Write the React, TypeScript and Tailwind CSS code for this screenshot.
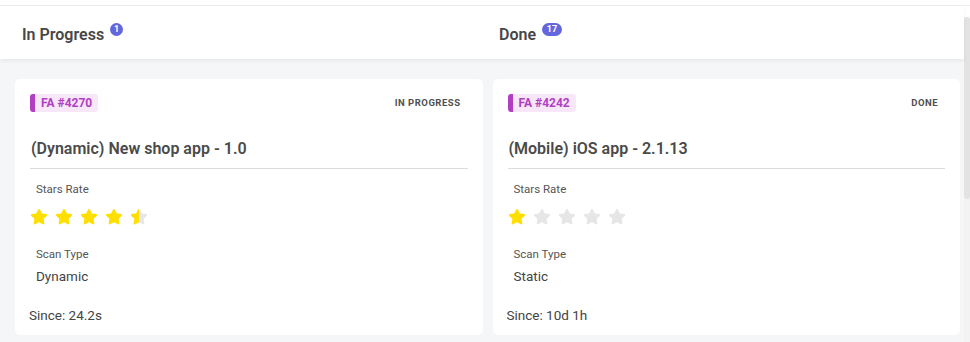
import { Star } from 'lucide-react';

type Card = {
  tag: string;
  status: string;
  title: string;
  rating: number;
  scanType: string;
  since: string;
};

const columns: { name: string; count: number; card: Card }[] = [
  {
    name: 'In Progress',
    count: 1,
    card: { tag: 'FA #4270', status: 'IN PROGRESS', title: '(Dynamic) New shop app - 1.0', rating: 4.5, scanType: 'Dynamic', since: '24.2s' },
  },
  {
    name: 'Done',
    count: 17,
    card: { tag: 'FA #4242', status: 'DONE', title: '(Mobile) iOS app - 2.1.13', rating: 1, scanType: 'Static', since: '10d 1h' },
  },
];

function StarIcon({ fill }: { fill: 'full' | 'half' | 'empty' }) {
  const gray = '#e6e6e6';
  const yellow = '#ffdf00';
  return (
    <div className="relative w-[18px] h-[18px]">
      <Star size={18} fill={fill === 'full' ? yellow : gray} color={fill === 'full' ? yellow : gray} strokeWidth={1.5} />
      {fill === 'half' && (
        <div className="absolute left-0 top-0 h-[18px] w-[9px] overflow-hidden">
          <Star size={18} fill={yellow} color={yellow} strokeWidth={1.5} />
        </div>
      )}
    </div>
  );
}

function Stars({ rating }: { rating: number }) {
  return (
    <div className="flex gap-[7px]">
      {[1, 2, 3, 4, 5].map((i) => (
        <StarIcon key={i} fill={rating >= i ? 'full' : rating >= i - 0.5 ? 'half' : 'empty'} />
      ))}
    </div>
  );
}

function TaskCard({ card }: { card: Card }) {
  return (
    <div className="bg-white rounded-[5px] h-[256px] px-[15px] pt-[15px] flex flex-col">
      <div className="flex items-center justify-between pr-[7px]">
        <span className="h-[18px] flex items-center border-l-[5px] border-[#b13fc2] bg-[#f7e7f9] rounded-[3px] pl-[6px] pr-[6px] text-[12px] font-bold text-[#b13fc2]">
          {card.tag}
        </span>
        <span className="text-[9.5px] font-bold tracking-[0.5px] text-[#4f4f4f]">{card.status}</span>
      </div>
      <div className="mt-[27px] ml-[1px] text-[16px] font-semibold text-[#4a4a4a] leading-[20px]">{card.title}</div>
      <div className="mt-[9px] border-t border-[#dcdcdc]" />
      <div className="pl-[6px] mt-[13px] text-[11.5px] text-[#555] leading-[14px]">Stars Rate</div>
      <div className="mt-[12px]">
        <Stars rating={card.rating} />
      </div>
      <div className="pl-[6px] mt-[21px] text-[11.5px] text-[#555] leading-[14px]">Scan Type</div>
      <div className="pl-[6px] mt-[6px] text-[13.5px] text-[#444] leading-[18px]">{card.scanType}</div>
      <div className="mt-[21px] ml-[-1px] text-[13.5px] text-[#444] leading-[18px]">Since: {card.since}</div>
    </div>
  );
}

export default function App() {
  return (
    <div className="w-[970px] h-[342px] bg-white overflow-hidden font-['Roboto',sans-serif]">
      <div className="h-[5px] bg-white" />
      <div className="border-t border-[#ececec] flex h-[337px]">
        <div className="flex-1 flex flex-col min-w-0">
          <div className="h-[53px] bg-white shadow-[0_2px_4px_rgba(0,0,0,0.06)] relative z-10 flex">
            {columns.map((col) => (
              <div key={col.name} className="w-[477px] pl-[22px] pt-[17px] flex items-start">
                <span className="text-[16px] font-semibold text-[#474747] leading-[22px] mt-[1px]">{col.name}</span>
                <span
                  className={`ml-[6px] h-[13px] rounded-full bg-[#6467dc] text-white text-[9px] font-bold flex items-center justify-center ${
                    col.count > 9 ? 'w-[20px]' : 'w-[13px]'
                  }`}
                >
                  {col.count}
                </span>
              </div>
            ))}
          </div>
          <div className="flex-1 bg-[#f5f6f8] pt-[20px] pl-[15px] pr-[4px] flex gap-[10px]">
            {columns.map((col) => (
              <div key={col.name} className="flex-1">
                <TaskCard card={col.card} />
              </div>
            ))}
          </div>
        </div>
        <div className="w-[6px] pt-[11px] bg-white">
          <div className="h-full bg-[#f3f3f3] rounded-t-[3px]">
            <div className="h-[182px] bg-[#e3e3e3] rounded-[3px]" />
          </div>
        </div>
      </div>
    </div>
  );
}
